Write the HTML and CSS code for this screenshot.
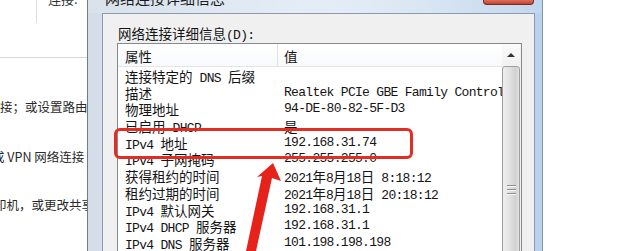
FILE: index.html
```html
<!DOCTYPE html>
<html>
  <head>
    <title>网络连接详细信息</title>
    <link rel="stylesheet" href="styles.css">
  </head>
  <body>
    <div class="page">
      <div class="bg">
        <div class="bg-top">
          <div class="bg-split"></div>
          <div class="bg-cut">连接:</div>
        </div>
        <div class="bg-rule"></div>
        <div class="bg-line first">接；或设置路由器</div>
        <div class="bg-line second">或 VPN 网络连接</div>
        <div class="bg-line third">印机，或更改共享</div>
      </div>

      <div class="window">
        <div class="titlebar">
          <div class="title">网络连接详细信息</div>
          <div class="close"></div>
        </div>
        <div class="win-row">
          <div class="dialog">
            <div class="label t"><span class="zh">网络连接详细信息</span>(D):</div>
            <div class="listbox">
              <div class="list-main t">
                <div class="list-head">
                  <div class="head-prop"><span class="zh">属性</span></div>
                  <div class="head-val"><span class="zh">值</span></div>
                </div>
                <div class="rows">
                  <div class="row"><div class="prop"><span class="zh">连接特定的</span> DNS <span class="zh">后缀</span></div><div class="val"></div></div>
                  <div class="row"><div class="prop"><span class="zh">描述</span></div><div class="val">Realtek PCIe GBE Family Controller</div></div>
                  <div class="row"><div class="prop"><span class="zh">物理地址</span></div><div class="val">94-DE-80-82-5F-D3</div></div>
                  <div class="row"><div class="prop"><span class="zh">已启用</span> DHCP</div><div class="val"><span class="zh">是</span></div></div>
                  <div class="row"><div class="prop">IPv4 <span class="zh">地址</span></div><div class="val">192.168.31.74</div></div>
                  <div class="row"><div class="prop">IPv4 <span class="zh">子网掩码</span></div><div class="val">255.255.255.0</div></div>
                  <div class="row"><div class="prop"><span class="zh">获得租约的时间</span></div><div class="val">2021<span class="zh">年</span>8<span class="zh">月</span>18<span class="zh">日</span> 8:18:12</div></div>
                  <div class="row"><div class="prop"><span class="zh">租约过期的时间</span></div><div class="val">2021<span class="zh">年</span>8<span class="zh">月</span>18<span class="zh">日</span> 20:18:12</div></div>
                  <div class="row"><div class="prop">IPv4 <span class="zh">默认网关</span></div><div class="val">192.168.31.1</div></div>
                  <div class="row"><div class="prop">IPv4 DHCP <span class="zh">服务器</span></div><div class="val">192.168.31.1</div></div>
                  <div class="row"><div class="prop">IPv4 DNS <span class="zh">服务器</span></div><div class="val">101.198.198.198</div></div>
                </div>
              </div>
              <div class="scrollbar">
                <div class="sb-up"><span class="sb-arrow"></span></div>
                <div class="sb-thumb">
                  <div class="sb-grip"><span></span><span></span><span></span></div>
                </div>
              </div>
            </div>
          </div>
        </div>
      </div>
    </div>

    <!-- annotation drawn over the screenshot -->
    <div class="mark"></div>
    <svg class="arrow" width="620" height="251" viewBox="0 0 620 251">
      <polygon points="273,163 281,181 272,178 256,251 246,251 262,176 257,177" fill="#e5231b" />
    </svg>
  </body>
</html>
```

FILE: styles.css
```css
* {
  box-sizing: border-box;
}
body {
  margin: 0;
  width: 620px;
  height: 251px;
  overflow: hidden;
  background-color: #fff;
  font-family: "Noto Sans CJK SC", sans-serif;
  position: relative;
}
.page {
  display: flex;
  height: 251px;
}

/* page behind the dialog */
.bg {
  width: 87px;
  flex: none;
  overflow: hidden;
  color: #2a2a2a;
  font-size: 12.5px;
}
.bg-top {
  display: flex;
  height: 23px;
}
.bg-split {
  width: 37px;
  border-right: 1px solid #dcdcdc;
}
.bg-cut {
  margin-left: 11px;
  margin-top: -10px;
  line-height: 18px;
  font-size: 13px;
  white-space: nowrap;
  color: #333;
}
.bg-rule {
  margin-top: 34px;
  border-top: 1px solid #d6d6d6;
}
.bg-line {
  white-space: nowrap;
  line-height: 18px;
}
.bg-line.first {
  margin-top: 40px;
}
.bg-line.second {
  margin-top: 32px;
  margin-left: -8px;
}
.bg-line.third {
  margin-top: 30px;
  margin-left: -6px;
}

/* window frame */
.window {
  width: 456px;
  flex: none;
  display: flex;
  flex-direction: column;
  border-left: 1px solid #6d7d8f;
  border-right: 1px solid #8094aa;
  background: linear-gradient(to right, #d5dee8, #d3dfec 60%, #b9d2ee);
}
.titlebar {
  height: 13px;
  flex: none;
  display: flex;
  background: linear-gradient(to right, rgba(255, 255, 255, 0.1), rgba(235, 243, 251, 0.7) 50%, rgba(255, 255, 255, 0.1));
}
.title {
  padding-left: 17px;
  margin-top: -11px;
  line-height: 18px;
  font-size: 15px;
  color: #1a1a1a;
  white-space: nowrap;
}
.close {
  margin-left: auto;
  margin-right: 8px;
  width: 51px;
  height: 5px;
  background: linear-gradient(#d9705d, #c2432f);
  border: 1px solid #7a2a1e;
  border-top: none;
  border-radius: 0 0 4px 4px;
}
.win-row {
  flex: 1;
  min-height: 0;
  display: flex;
  padding: 0 7px 0 14px;
}
.dialog {
  flex: 1;
  min-width: 0;
  background-color: #f0f0f0;
  border: 1px solid #8a9bb0;
  border-bottom: none;
  padding: 11px 12px 0 14px;
}

/* text */
.t {
  font-family: "Liberation Mono", monospace;
  font-size: 13px;
  letter-spacing: -0.7px;
  color: #141414;
}
.zh {
  font-family: "Noto Sans CJK SC", sans-serif;
  font-size: 13.5px;
  letter-spacing: 0;
}
.label {
  height: 17px;
  line-height: 17px;
  padding-left: 1px;
  margin-bottom: 1px;
  white-space: nowrap;
}

/* list view */
.listbox {
  display: flex;
  height: 260px;
  border: 1px solid #848991;
  background-color: #fff;
}
.list-main {
  flex: 1;
  min-width: 0;
  overflow: hidden;
}
.list-head {
  display: flex;
  height: 23px;
  border-bottom: 1px solid #e5e5e5;
  background: linear-gradient(#fff, #f8f9fb);
  line-height: 16.7px;
}
.head-prop {
  width: 160px;
  padding: 4px 0 0 7px;
  border-right: 1px solid #e2e2e2;
}
.head-val {
  padding: 4px 0 0 6px;
}
.rows {
  padding-top: 1px;
}
.row {
  display: flex;
  height: 16.7px;
  line-height: 16.7px;
  white-space: nowrap;
}
.prop {
  width: 166px;
  flex: none;
  padding-left: 7px;
}
.val {
  flex: 1;
  min-width: 0;
  overflow: hidden;
}

/* scrollbar */
.scrollbar {
  width: 19px;
  flex: none;
  display: flex;
  flex-direction: column;
  background-color: #f2f2f2;
  padding-right: 1px;
}
.sb-up {
  height: 21px;
  flex: none;
  display: flex;
  justify-content: center;
  align-items: center;
  background: linear-gradient(#fbfbfb, #f1f1f1);
}
.sb-arrow {
  width: 0;
  height: 0;
  border-left: 4px solid transparent;
  border-right: 4px solid transparent;
  border-bottom: 4px solid #333;
}
.sb-thumb {
  flex: 1;
  margin-top: 1px;
  border: 1px solid #9d9d9d;
  border-radius: 3px 3px 0 0;
  background: linear-gradient(to right, #efefef, #e2e2e2 40%, #d0d0d0 80%, #e4e4e4);
  display: flex;
  justify-content: center;
  padding-top: 118px;
}
.sb-grip {
  display: flex;
  flex-direction: column;
  gap: 2px;
}
.sb-grip span {
  width: 9px;
  height: 2px;
  background-color: #8e8e8e;
  border-bottom: 1px solid #f6f6f6;
}

/* red annotation */
.mark {
  position: absolute;
  left: 114px;
  top: 128px;
  width: 299px;
  height: 31px;
  border: 3px solid #e22d22;
  border-radius: 6px;
}
.arrow {
  position: absolute;
  left: 0;
  top: 0;
}
```
